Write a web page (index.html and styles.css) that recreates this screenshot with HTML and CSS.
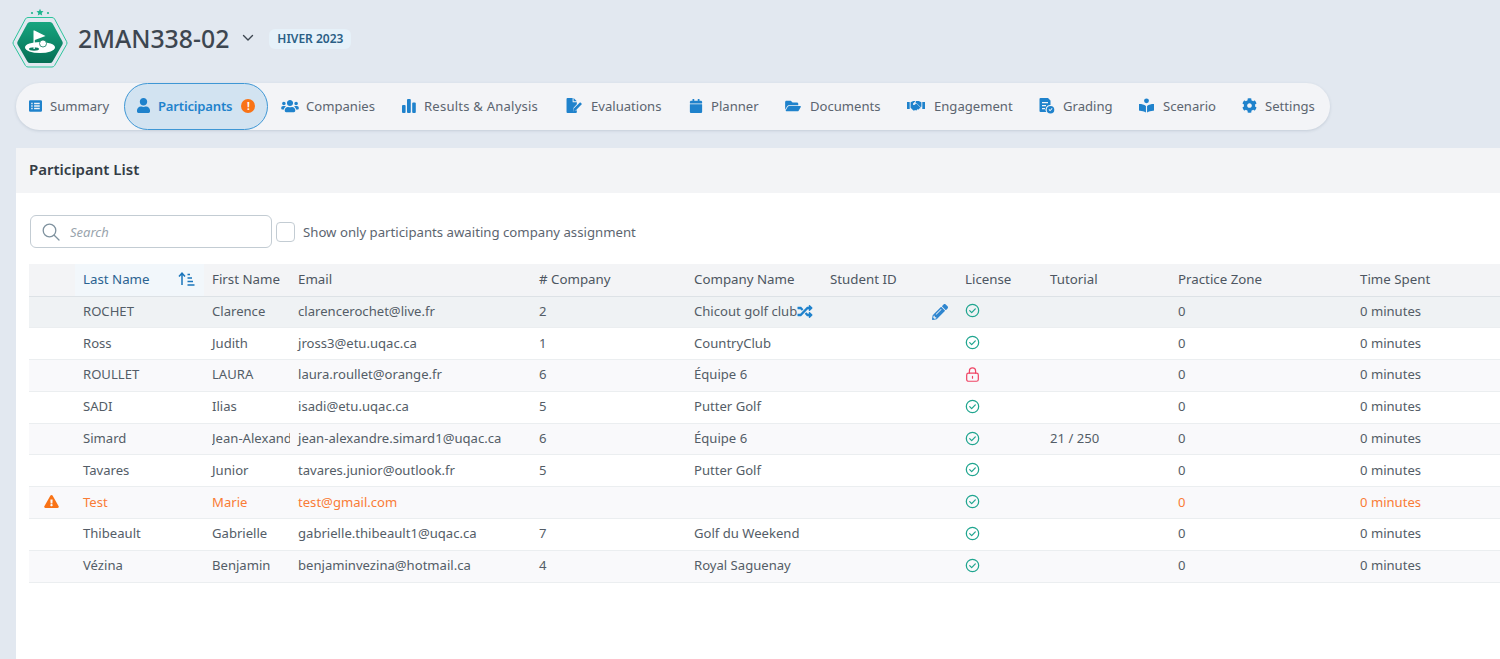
FILE: index.html
```html
<!DOCTYPE html>
<html lang="en">
<head>
<meta charset="utf-8">
<title>2MAN338-02</title>
<link rel="stylesheet" href="styles.css">
</head>
<body>
<header class="top">
  <svg class="logo" viewBox="0 0 56 60" aria-hidden="true">
    <defs><linearGradient id="hexg" x1="0" y1="0" x2="0" y2="1"><stop offset="0" stop-color="#17a57f"/><stop offset="1" stop-color="#056e55"/></linearGradient></defs>
    <path d="M28 .8l1 2.200 2.500.3-1.800 1.700.5 2.400-2.200-1.200-2.200 1.200.5-2.400-1.800-1.700 2.500-.3z" fill="#1fb58e"/>
    <circle cx="20" cy="5" r="1.100" fill="#1fb58e"/><circle cx="36" cy="5" r="1.100" fill="#1fb58e"/>
    <path d="M16 9.500h24a3 3 0 0 1 2.600 1.500l12 22.500a3 3 0 0 1 0 3L42.600 57.500a3 3 0 0 1-2.600 1.500H16a3 3 0 0 1-2.600-1.500L1.400 36.500a3 3 0 0 1 0-3L13.400 11A3 3 0 0 1 16 9.500z" fill="none" stroke="#2cc49c" stroke-width="1"/>
    <path d="M18 14h20a3 3 0 0 1 2.600 1.500l9.800 18a3 3 0 0 1 0 3L40.600 53.500A3 3 0 0 1 38 55H18a3 3 0 0 1-2.600-1.500L5.600 36.500a3 3 0 0 1 0-3l9.800-18A3 3 0 0 1 18 14z" fill="url(#hexg)"/>
    <ellipse cx="28" cy="39.500" rx="15" ry="5.500" fill="#fff"/>
    <ellipse cx="22" cy="41" rx="5" ry="1.700" fill="#0b7c60"/>
    <path d="M21.500 22.500V41h1.300V32l10.700-4-11-5.500z" fill="#fff"/>
    <circle cx="31" cy="35.500" r="3.500" fill="#fff" stroke="#0b7c60" stroke-width=".8"/>
  </svg>
  <h1 class="title">2MAN338-02</h1>
  <svg class="chev" viewBox="0 0 12 8" aria-hidden="true"><path d="M1.500 1.500L6 6l4.500-4.500" fill="none" stroke="#3d4650" stroke-width="1.400" stroke-linecap="round" stroke-linejoin="round"/></svg>
  <span class="term">HIVER 2023</span>
</header>

<nav class="tabs">
  <a class="tab"><svg class="ico i-summary" viewBox="0 0 512 512"><path fill-rule="evenodd" d="M48 32h416a48 48 0 0 1 48 48v352a48 48 0 0 1-48 48H48a48 48 0 0 1-48-48V80a48 48 0 0 1 48-48zm40 96v56h56v-56zm112 0v56h224v-56zM88 228v56h56v-56zm112 0v56h224v-56zM88 328v56h56v-56zm112 0v56h224v-56z"/></svg>Summary</a>
  <a class="tab active"><svg class="ico i-user" viewBox="0 0 448 512"><path d="M224 256c70.700 0 128-57.300 128-128S294.700 0 224 0 96 57.300 96 128s57.300 128 128 128zm89.600 32h-16.700c-22.200 10.200-46.900 16-72.900 16s-50.600-5.800-72.900-16h-16.700C60.200 288 0 348.200 0 422.400V464c0 26.500 21.500 48 48 48h352c26.500 0 48-21.500 48-48v-41.600c0-74.200-60.200-134.400-134.400-134.400z"/></svg>Participants<span class="alert">!</span></a>
  <a class="tab"><svg class="ico i-users" viewBox="0 0 640 512"><path d="M96 224c35.300 0 64-28.700 64-64s-28.700-64-64-64-64 28.700-64 64 28.700 64 64 64zm448 0c35.300 0 64-28.700 64-64s-28.700-64-64-64-64 28.700-64 64 28.700 64 64 64zm32 32h-64c-17.600 0-33.500 7.100-45.100 18.600 40.300 22.100 68.900 62 75.100 109.400h66c17.700 0 32-14.300 32-32v-32c0-35.300-28.700-64-64-64zm-256 0c61.900 0 112-50.100 112-112S381.900 32 320 32 208 82.100 208 144s50.100 112 112 112zm76.800 32h-8.300c-20.800 10-43.900 16-68.500 16s-47.600-6-68.500-16h-8.300C179.600 288 128 339.600 128 403.200V432c0 26.500 21.500 48 48 48h288c26.500 0 48-21.500 48-48v-28.800c0-63.600-51.600-115.200-115.200-115.200zm-223.700-13.400C161.500 263.100 145.600 256 128 256H64c-35.300 0-64 28.700-64 64v32c0 17.700 14.300 32 32 32h65.900c6.300-47.400 34.900-87.300 75.200-109.400z"/></svg>Companies</a>
  <a class="tab"><svg class="ico" viewBox="0 0 14 14"><rect x="0" y="6" width="3.600" height="8" rx="1"/><rect x="5" y="0" width="3.800" height="14" rx="1"/><rect x="10.200" y="3.500" width="3.600" height="10.500" rx="1"/></svg><span class="results">Results &amp; Analysis</span></a>
  <a class="tab"><svg class="ico i-eval" viewBox="0 0 18 16"><path d="M1.500 0H7v4.500h4.500v2.200L8 10.300 7.300 14l3.800-.7.400-.4V15a1 1 0 0 1-1 1H1.500a1 1 0 0 1-1-1V1a1 1 0 0 1 1-1zM8 0l3.500 3.500H8z"/><path d="M15 4.500l2 2-7 7-2.500.5.500-2.500z"/></svg>Evaluations</a>
  <a class="tab"><svg class="ico" viewBox="0 0 448 512"><path d="M12 192h424c6.600 0 12 5.400 12 12v260c0 26.500-21.500 48-48 48H48c-26.500 0-48-21.500-48-48V204c0-6.600 5.400-12 12-12zm436-44v-36c0-26.500-21.500-48-48-48h-48V12c0-6.600-5.400-12-12-12h-40c-6.600 0-12 5.400-12 12v52H160V12c0-6.600-5.400-12-12-12h-40c-6.600 0-12 5.400-12 12v52H48C21.500 64 0 85.500 0 112v36c0 6.600 5.400 12 12 12h424c6.600 0 12-5.400 12-12z"/></svg>Planner</a>
  <a class="tab"><svg class="ico i-folder" viewBox="0 0 576 512"><path d="M572.694 292.093L500.270 416.248A63.997 63.997 0 0 1 444.989 448H45.025c-18.523 0-30.064-20.093-20.731-36.093l72.424-124.155A64 64 0 0 1 152 256h399.964c18.523 0 30.064 20.093 20.730 36.093zM152 224h328v-48c0-26.510-21.490-48-48-48H272l-64-64H48C21.490 64 0 85.490 0 112v278.046l69.077-118.418C86.214 242.250 117.989 224 152 224z"/></svg>Documents</a>
  <a class="tab"><svg class="ico i-hands" viewBox="0 0 20 14"><path d="M0 3h3v8H0zM17 3h3v8h-3z"/><path d="M4 3.500l3-1.500h2.500L6.800 4.700c-.7.800.4 2.300 1.700 1.500l2-1.500 4.500 4.500.000 .8h-1l-1 1.500-1.500-.3-1 1.300-1.700-.5-1 .8-1-.6L4 9.500z"/><path d="M10 2h3l3 1.500v5l-1 .3-4.600-4.600-1 .7z"/></svg>Engagement</a>
  <a class="tab"><svg class="ico i-grade" viewBox="0 0 16 16"><path fill-rule="evenodd" d="M1.500 0H9l2.500 2.500V7A4.500 4.500 0 0 0 7.300 14H1.500a1 1 0 0 1-1-1V1a1 1 0 0 1 1-1zM3 4v1.200h6V4zm0 3v1.200h4V7zm0 3v1.200h3V10z"/><path fill-rule="evenodd" d="M11.500 8a3.800 3.800 0 1 1 0 7.600 3.800 3.800 0 0 1 0-7.600zm-1.900 3.800l1.500 1.500 2.400-2.500-.7-.7-1.700 1.800-.8-.8z"/></svg>Grading</a>
  <a class="tab"><svg class="ico i-book" viewBox="0 0 16 16"><circle cx="8" cy="3" r="2.600"/><path d="M0 6.500c3 0 5.500.7 7.400 2V15.500C5.500 14.300 3 13.800 1 13.700a1 1 0 0 1-1-1zM16 6.500c-3 0-5.500.7-7.400 2V15.500c1.900-1.200 4.400-1.700 6.400-1.800a1 1 0 0 0 1-1z"/></svg>Scenario</a>
  <a class="tab"><svg class="ico i-cog" viewBox="0 0 512 512"><path d="M487.400 315.700l-42.600-24.600c4.300-23.200 4.300-47 0-70.200l42.600-24.600c4.900-2.800 7.100-8.600 5.500-14-11.100-35.600-30-67.800-54.700-94.600-3.800-4.100-10-5.100-14.800-2.300L380.800 110c-17.900-15.400-38.500-27.300-60.800-35.100V25.800c0-5.600-3.900-10.500-9.400-11.700-36.700-8.200-74.300-7.800-109.200 0-5.500 1.200-9.400 6.100-9.400 11.700V75c-22.200 7.900-42.800 19.800-60.800 35.100L88.700 85.500c-4.900-2.800-11-1.900-14.800 2.300-24.700 26.700-43.600 58.900-54.700 94.600-1.700 5.400.6 11.200 5.500 14L67.300 221c-4.300 23.200-4.300 47 0 70.200l-42.600 24.600c-4.900 2.800-7.100 8.600-5.500 14 11.100 35.600 30 67.800 54.700 94.600 3.800 4.100 10 5.100 14.800 2.300l42.600-24.600c17.900 15.400 38.500 27.300 60.800 35.100v49.200c0 5.600 3.900 10.500 9.400 11.700 36.700 8.200 74.300 7.800 109.200 0 5.500-1.200 9.400-6.100 9.400-11.700v-49.200c22.200-7.900 42.800-19.800 60.800-35.100l42.600 24.600c4.900 2.800 11 1.900 14.800-2.300 24.700-26.700 43.600-58.900 54.700-94.600 1.500-5.500-.7-11.300-5.600-14.100zM256 336c-44.100 0-80-35.900-80-80s35.900-80 80-80 80 35.900 80 80-35.900 80-80 80z"/></svg>Settings</a>
</nav>

<main class="card">
  <h2 class="card-head">Participant List</h2>
  <div class="card-body">
    <div class="filters">
      <label class="search">
        <svg class="search-ico" viewBox="0 0 18 18"><circle cx="7.500" cy="7.500" r="6.300" fill="none" stroke="#7f929f" stroke-width="1.300"/><path d="M12.200 12.200L17 17" stroke="#7f929f" stroke-width="1.300" stroke-linecap="round"/></svg>
        <input class="search-input" type="text" placeholder="Search">
      </label>
      <label class="only"><span class="check"></span>Show only participants awaiting company assignment</label>
    </div>

    <table class="grid">
      <colgroup>
        <col class="c0"><col class="c1"><col class="c2"><col class="c3"><col class="c4"><col class="c5"><col class="c6"><col class="c7"><col class="c8"><col class="c9"><col class="c10">
      </colgroup>
      <thead>
        <tr>
          <th></th>
          <th class="sorted"><span class="sort-wrap">Last Name<svg class="sort" viewBox="0 0 17 14"><path d="M4 13V1.500M1 4.500L4 1.200l3 3.300M9.500 2.500h2.500M9.500 6h4.500M9.500 9.500h5.500M9.500 13h7" fill="none" stroke="#1a75bc" stroke-width="1.500"/></svg></span></th>
          <th>First Name</th><th>Email</th><th># Company</th><th>Company Name</th><th>Student ID</th><th>License</th><th>Tutorial</th><th>Practice Zone</th><th>Time Spent</th>
        </tr>
      </thead>
      <tbody>
        <tr class="hover">
          <td></td><td>ROCHET</td><td>Clarence</td><td>clarencerochet@live.fr</td><td>2</td>
          <td class="rel">Chicout golf club<svg class="shuffle" viewBox="0 0 512 512"><path d="M504.971 359.029c9.373 9.373 9.373 24.569 0 33.941l-80 79.984c-15.010 15.010-40.971 4.490-40.971-16.971V416h-58.785a12.004 12.004 0 0 1-8.773-3.812l-70.556-75.596 53.333-57.143L352 336h32v-39.981c0-21.438 25.943-31.998 40.971-16.971l80 79.981zM12 176h84l52.781 56.551 53.333-57.143-70.556-75.596A11.999 11.999 0 0 0 122.785 96H12c-6.627 0-12 5.373-12 12v56c0 6.627 5.373 12 12 12zm372 0v39.984c0 21.460 25.961 31.980 40.971 16.971l80-79.984c9.373-9.373 9.373-24.569 0-33.941l-80-79.981C409.943 24.021 384 34.582 384 56.019V96h-58.785a12.004 12.004 0 0 0-8.773 3.812L96 336H12c-6.627 0-12 5.373-12 12v56c0 6.627 5.373 12 12 12h110.785c3.326 0 6.503-1.381 8.773-3.812L352 176h32z"/></svg></td>
          <td class="rel"><svg class="pencil" viewBox="0 0 512 512"><path d="M497.900 142.100l-46.100 46.100c-4.700 4.700-12.300 4.700-17 0l-111-111c-4.700-4.700-4.700-12.300 0-17l46.100-46.100c18.700-18.700 49.100-18.700 67.900 0l60.100 60.100c18.800 18.700 18.800 49.100 0 67.900zM284.200 99.800L21.600 362.400.4 483.900c-2.900 16.400 11.400 30.600 27.800 27.800l121.500-21.300 262.600-262.600c4.700-4.700 4.700-12.300 0-17l-111-111c-4.800-4.700-12.400-4.700-17.100 0zM124.100 339.900c-5.500-5.500-5.500-14.300 0-19.800l154-154c5.500-5.500 14.300-5.500 19.800 0s5.500 14.300 0 19.800l-154 154c-5.500 5.500-14.300 5.500-19.800 0zM88 424h48v36.300l-64.500 11.300-31.100-31.100L51.700 376H88v48z"/></svg></td>
          <td><svg class="ok" viewBox="0 0 16 16"><circle cx="8" cy="8" r="6.600"/><path d="M5 8.200l2.100 2.100L11 6.300"/></svg></td><td></td><td>0</td><td>0 minutes</td>
        </tr>
        <tr>
          <td></td><td>Ross</td><td>Judith</td><td>jross3@etu.uqac.ca</td><td>1</td><td>CountryClub</td><td></td>
          <td><svg class="ok" viewBox="0 0 16 16"><circle cx="8" cy="8" r="6.600"/><path d="M5 8.200l2.100 2.100L11 6.300"/></svg></td><td></td><td>0</td><td>0 minutes</td>
        </tr>
        <tr>
          <td></td><td>ROULLET</td><td>LAURA</td><td>laura.roullet@orange.fr</td><td>6</td><td>Équipe 6</td><td></td>
          <td><svg class="lock" viewBox="0 0 16 16"><rect x="1.800" y="6.500" width="12.400" height="8.700" rx="2"/><path d="M4.700 6.500V4.300a3.300 3.300 0 0 1 6.600 0v2.200M8 10v2"/></svg></td><td></td><td>0</td><td>0 minutes</td>
        </tr>
        <tr>
          <td></td><td>SADI</td><td>Ilias</td><td>isadi@etu.uqac.ca</td><td>5</td><td>Putter Golf</td><td></td>
          <td><svg class="ok" viewBox="0 0 16 16"><circle cx="8" cy="8" r="6.600"/><path d="M5 8.200l2.100 2.100L11 6.300"/></svg></td><td></td><td>0</td><td>0 minutes</td>
        </tr>
        <tr>
          <td></td><td>Simard</td><td><div class="clip">Jean-Alexandre</div></td><td>jean-alexandre.simard1@uqac.ca</td><td>6</td><td>Équipe 6</td><td></td>
          <td><svg class="ok" viewBox="0 0 16 16"><circle cx="8" cy="8" r="6.600"/><path d="M5 8.200l2.100 2.100L11 6.300"/></svg></td><td>21 / 250</td><td>0</td><td>0 minutes</td>
        </tr>
        <tr>
          <td></td><td>Tavares</td><td>Junior</td><td>tavares.junior@outlook.fr</td><td>5</td><td>Putter Golf</td><td></td>
          <td><svg class="ok" viewBox="0 0 16 16"><circle cx="8" cy="8" r="6.600"/><path d="M5 8.200l2.100 2.100L11 6.300"/></svg></td><td></td><td>0</td><td>0 minutes</td>
        </tr>
        <tr class="warn">
          <td class="warn-cell"><svg class="warn-ico" viewBox="0 0 576 512"><path d="M569.517 440.013C587.975 472.007 564.806 512 527.940 512H48.054c-36.937 0-59.999-40.055-41.577-71.987L246.423 24.035c18.467-32.009 64.720-31.951 83.154 0l239.940 416.028zM288 354c-25.405 0-46 20.595-46 46s20.595 46 46 46 46-20.595 46-46-20.595-46-46-46zm-43.673-165.346l7.418 136c.347 6.364 5.609 11.346 11.982 11.346h48.546c6.373 0 11.635-4.982 11.982-11.346l7.418-136c.375-6.874-5.098-12.654-11.982-12.654h-63.383c-6.884 0-12.356 5.780-11.981 12.654z"/></svg></td>
          <td>Test</td><td>Marie</td><td>test@gmail.com</td><td></td><td></td><td></td>
          <td><svg class="ok" viewBox="0 0 16 16"><circle cx="8" cy="8" r="6.600"/><path d="M5 8.200l2.100 2.100L11 6.300"/></svg></td><td></td><td>0</td><td>0 minutes</td>
        </tr>
        <tr>
          <td></td><td>Thibeault</td><td>Gabrielle</td><td>gabrielle.thibeault1@uqac.ca</td><td>7</td><td>Golf du Weekend</td><td></td>
          <td><svg class="ok" viewBox="0 0 16 16"><circle cx="8" cy="8" r="6.600"/><path d="M5 8.200l2.100 2.100L11 6.300"/></svg></td><td></td><td>0</td><td>0 minutes</td>
        </tr>
        <tr>
          <td></td><td>Vézina</td><td>Benjamin</td><td>benjaminvezina@hotmail.ca</td><td>4</td><td>Royal Saguenay</td><td></td>
          <td><svg class="ok" viewBox="0 0 16 16"><circle cx="8" cy="8" r="6.600"/><path d="M5 8.200l2.100 2.100L11 6.300"/></svg></td><td></td><td>0</td><td>0 minutes</td>
        </tr>
      </tbody>
    </table>
  </div>
</main>
</body>
</html>
```
FILE: styles.css
```css
* { box-sizing: border-box; }
html, body { height: 100%; }
body {
  margin: 0;
  background: #e2e8f0;
  font-family: "Noto Sans", "Open Sans", sans-serif;
  color: #49525c;
  overflow: hidden;
  padding-left: 16px;
}
.top {
  display: flex;
  align-items: center;
  height: 83px;
  padding: 0 0 7px 0;
  margin-left: -4px;
}
.logo { width: 56px; height: 60px; flex: none; }
.title {
  margin: 0 0 0 10px;
  font-size: 24.800px;
  font-weight: 500;
  color: #3d4650;
}
.chev { width: 12px; height: 8px; margin-left: 13px; }
.term {
  margin: 2px 0 0 15px;
  padding: 0 8px;
  height: 20px;
  line-height: 20px;
  border-radius: 6px;
  background: #e6f1f9;
  color: #2b5f86;
  font-size: 12px;
  font-weight: 600;
}
.tabs {
  display: grid;
  grid-template-columns: 108px 144px 121px 164px 123px 96px 122px 132px 100px 103px 101px;
  align-items: center;
  width: 1314px;
  height: 47px;
  border-radius: 24px;
  background: #f3f4f7;
  box-shadow: 0 1px 3px rgba(90, 110, 130, .22);
  font-size: 13.100px;
}
.tab {
  display: flex;
  align-items: center;
  height: 47px;
  padding-left: 13px;
  padding-bottom: 2px;
  color: #5c6570;
  white-space: nowrap;
}
.results { letter-spacing: .2px; }
.ico {
  width: 14px;
  height: 14px;
  margin-right: 8px;
  fill: #1f82cc;
  flex: none;
}
.i-summary { width: 13px; }
.i-user { width: 13px; height: 15px; }
.i-users { width: 18px; margin-right: 7px; }
.i-eval { width: 17px; height: 15px; }
.i-folder { width: 16px; margin-right: 9px; }
.i-hands { width: 18px; height: 13px; margin-right: 9px; }
.i-grade { width: 16px; height: 16px; }
.i-book { width: 15px; height: 15px; margin-right: 9px; }
.i-cog { width: 15px; height: 15px; }
.tab.active {
  padding-left: 12px;
  border: 1px solid #3f97d5;
  border-radius: 24px;
  background: #d2e3f1;
  color: #1f82cc;
  font-weight: 600;
  letter-spacing: -.2px;
}
.alert {
  width: 14px;
  height: 14px;
  margin-left: 9px;
  border-radius: 50%;
  background: #f97316;
  color: #fff;
  font-size: 10px;
  font-weight: 700;
  line-height: 14px;
  text-align: center;
}
.card {
  margin-top: 18px;
  background: #fff;
  min-height: 520px;
}
.card-head {
  margin: 0;
  height: 45px;
  padding: 0 13px;
  line-height: 42px;
  background: #f3f4f6;
  font-size: 15px;
  font-weight: 600;
  color: #343c45;
}
.card-body { padding: 22px 0 0 13px; }
.filters {
  display: flex;
  align-items: center;
  height: 33px;
  margin-left: 1px;
  font-size: 13.200px;
}
.search {
  display: flex;
  align-items: center;
  width: 242px;
  height: 33px;
  padding: 0 11px;
  border: 1px solid #c3ccd3;
  border-radius: 6px;
}
.search-ico { width: 18px; height: 18px; flex: none; }
.search-input {
  width: 170px;
  margin-left: 10px;
  border: 0;
  outline: 0;
  padding: 0;
  font: italic 13px "Noto Sans", sans-serif;
  color: #49525c;
}
.search-input::placeholder { color: #9aa4ad; }
.only { display: flex; align-items: center; color: #5c6570; }
.check {
  width: 19px;
  height: 20px;
  margin: 0 8px 0 4px;
  border: 1px solid #c3ccd3;
  border-radius: 4px;
}
.grid {
  table-layout: fixed;
  width: 1500px;
  margin-top: 16px;
  border-collapse: collapse;
  font-size: 13.100px;
}
.c0 { width: 46px; }
.c1 { width: 129px; }
.c2 { width: 86px; }
.c3 { width: 241px; }
.c4 { width: 155px; }
.c5 { width: 136px; }
.c6 { width: 135px; }
.c7 { width: 85px; }
.c8 { width: 128px; }
.c9 { width: 182px; }
.c10 { width: 177px; }
.grid th {
  height: 32px;
  padding: 0 8px 2px;
  background: #f3f4f6;
  border-bottom: 1px solid #dde2e6;
  font-size: 13.300px;
  font-weight: 400;
  text-align: left;
  color: #4d5661;
}
.grid th.sorted { background: #f2f7fb; color: #2b6391; padding-right: 9px; }
.sort-wrap { display: flex; align-items: center; justify-content: space-between; }
.sort { width: 17px; height: 14px; }
.grid td {
  height: 31.800px;
  padding: 0 8px 2px;
  border-bottom: 1px solid #ebeef0;
  color: #545d67;
  white-space: nowrap;
}
.grid tbody tr:nth-child(odd) td { background: #f9f9fb; }
.grid tbody tr.hover td { background: #eff2f4; }
.grid tbody tr.warn td { color: #f97c36; }
.clip { overflow: hidden; width: 78px; }
.rel { position: relative; }
.shuffle {
  position: absolute;
  left: 111px;
  top: 7px;
  width: 16px;
  height: 15px;
  fill: #1f82cc;
}
.pencil {
  position: absolute;
  right: 9px;
  top: 7px;
  width: 16px;
  height: 16px;
  fill: #2f86cf;
}
.ok, .lock {
  display: block;
  width: 15px;
  height: 15px;
  fill: none;
  stroke-width: 1.300;
  stroke-linecap: round;
  stroke-linejoin: round;
}
.ok { stroke: #1fa58f; }
.lock { stroke: #ef4565; }
.warn-ico { display: block; width: 15px; height: 13px; margin-left: 7px; fill: #f97316; }
```
